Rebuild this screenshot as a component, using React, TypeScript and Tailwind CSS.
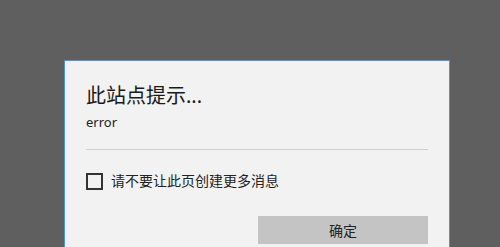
export default function App() {
  return (
    <div
      className="h-[247px] w-[500px] overflow-hidden bg-[#5f5f5f] pl-[64px] pt-[60px]"
      style={{ fontFamily: '"Noto Sans", "Noto Sans CJK SC", sans-serif' }}
    >
      <div className="h-[200px] w-[386px] border border-[#4a95dc] bg-[#f2f2f2] px-[21px] pt-[22px]">
        <h1 className="text-[20px] leading-[26px] text-[#1a1a1a]">此站点提示...</h1>
        <p className="mt-[4px] text-[13px] leading-[18px] text-[#222]">error</p>
        <div className="mt-[18px] h-px w-[342px] bg-[#cfcfcf]" />
        <label className="mt-[22px] flex items-center gap-[8px]">
          <span className="h-[17px] w-[17px] border-2 border-[#333]" />
          <span className="text-[14px] leading-[18px] text-[#222]">请不要让此页创建更多消息</span>
        </label>
        <div className="mt-[26px] flex justify-end">
          <button className="h-[28px] w-[170px] bg-[#c4c4c4] text-[14px] text-[#222]">确定</button>
        </div>
      </div>
    </div>
  );
}
